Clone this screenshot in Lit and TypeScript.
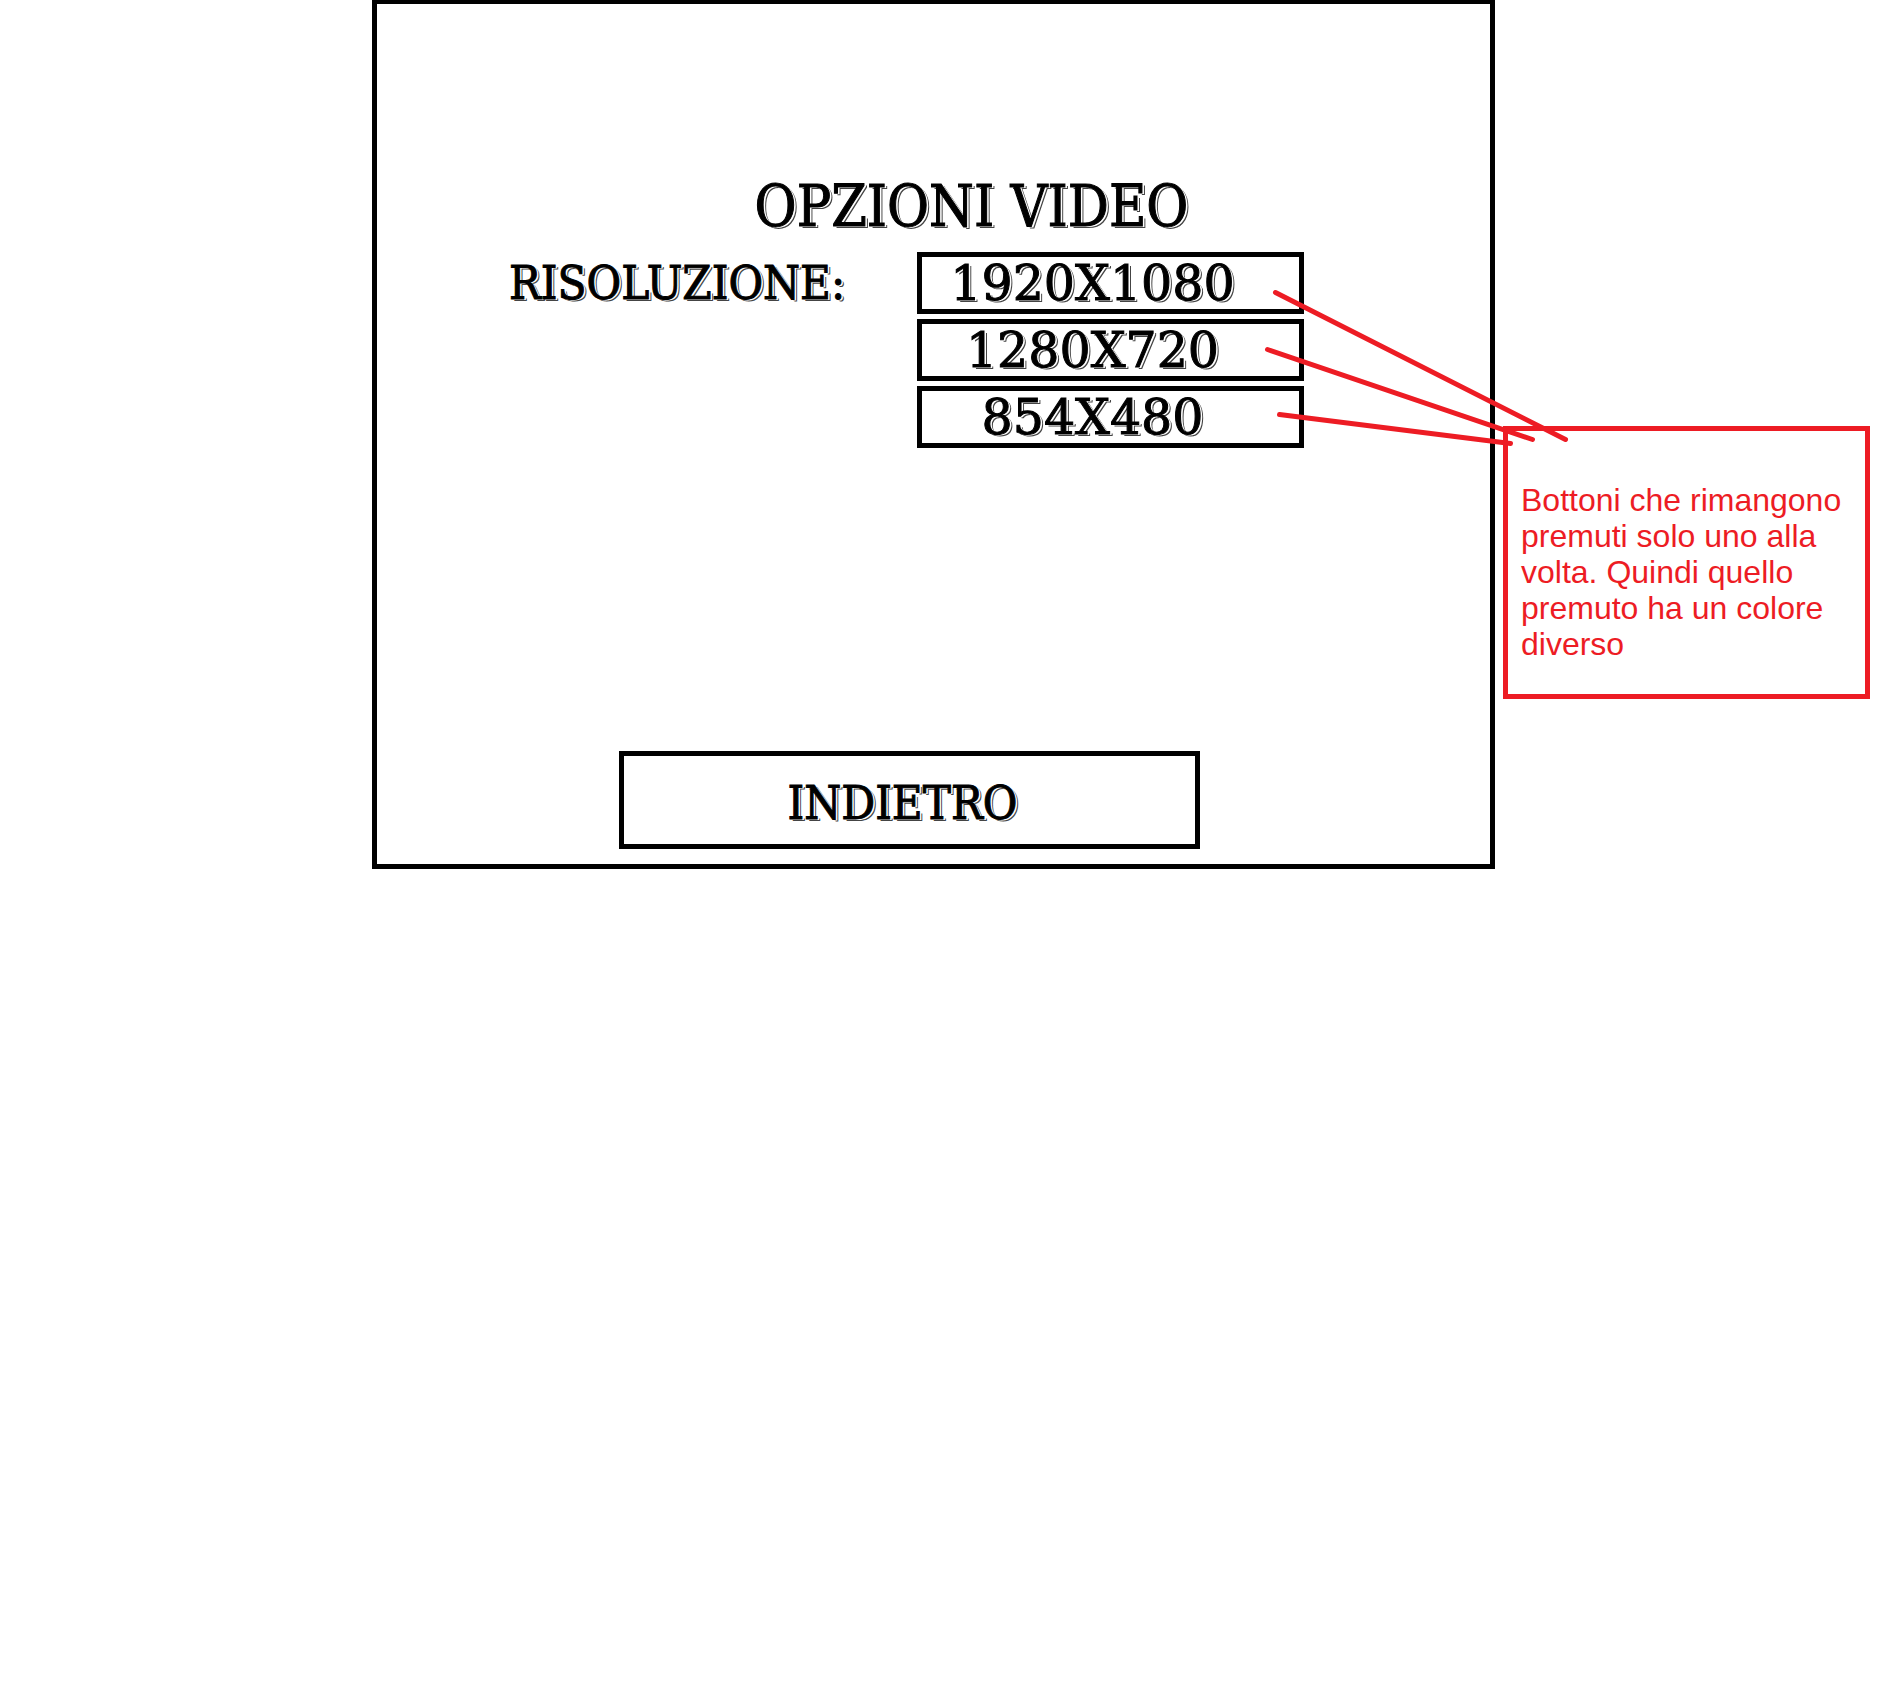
import { LitElement, html, css } from "lit";
import { customElement, state } from "lit/decorators.js";

@customElement("app-root")
export class AppRoot extends LitElement {
  @state() private selected = "";

  private readonly resolutions = ["1920X1080", "1280X720", "854X480"];

  static styles = css`
    :host {
      display: block;
      min-height: 100vh;
      background: #fff;
      color: #000;
    }
    .page {
      position: relative;
      display: grid;
      grid-template-columns: 372fr 1123fr 8fr 367fr 8fr;
      align-items: start;
    }
    .screen {
      grid-column: 2;
      box-sizing: border-box;
      border: 5px solid #000;
      border-top-width: 4px;
      padding: 170px 0 15px;
      display: flex;
      flex-direction: column;
    }
    .engraved {
      font-family: "DejaVu Serif Condensed", "DejaVu Serif", serif;
      font-weight: 400;
      white-space: nowrap;
      -webkit-text-stroke: 1px #000;
      text-shadow: 2px 1px 0 #fff, 3px 2px 0 #444;
    }
    .title {
      margin: 0;
      padding-left: 76px;
      text-align: center;
      font-size: 57px;
      line-height: 64px;
    }
    .options {
      display: grid;
      grid-template-columns: 132fr 408fr 387fr 186fr;
      margin-top: 14px;
    }
    .label {
      grid-column: 2;
      font-size: 47px;
      line-height: 62px;
    }
    .choices {
      grid-column: 3;
      display: flex;
      flex-direction: column;
      gap: 5px;
    }
    button {
      box-sizing: border-box;
      margin: 0;
      border: 5px solid #000;
      background: #fff;
      color: #000;
      cursor: pointer;
    }
    .choice {
      height: 62px;
      padding: 2px 36px 0 0;
      font-family: "DejaVu Serif", serif;
      font-size: 49px;
      line-height: 50px;
    }
    .choice[aria-pressed="true"] {
      background: #ffe08a;
    }
    .footer {
      display: grid;
      grid-template-columns: 242fr 581fr 290fr;
      margin-top: 303px;
    }
    .back {
      grid-column: 2;
      height: 98px;
      padding: 6px 14px 0 0;
      font-size: 47px;
      line-height: 56px;
    }
    .note {
      grid-column: 4;
      box-sizing: border-box;
      margin: 426px 0 0;
      border: 5px solid #ed1c24;
      padding: 51px 13px 32px;
      color: #ed1c24;
      font-family: "Liberation Sans", Arial, sans-serif;
      font-size: 32px;
      line-height: 36px;
    }
    .connectors {
      position: absolute;
      top: 0;
      left: 0;
      width: 100%;
      height: 869px;
      pointer-events: none;
      stroke: #ed1c24;
      stroke-width: 5px;
      stroke-linecap: round;
    }
    .connectors line {
      vector-effect: non-scaling-stroke;
    }
  `;

  render() {
    return html`
      <div class="page">
        <main class="screen">
          <h1 class="title engraved">OPZIONI VIDEO</h1>
          <div class="options">
            <div class="label engraved" id="resolution-label">RISOLUZIONE:</div>
            <div class="choices" role="group" aria-labelledby="resolution-label">
              ${this.resolutions.map(
                (r) => html`<button
                  type="button"
                  class="engraved choice"
                  aria-pressed=${this.selected === r ? "true" : "false"}
                  @click=${() => (this.selected = r)}
                >${r}</button>`
              )}
            </div>
          </div>
          <div class="footer">
            <button type="button" class="back engraved">INDIETRO</button>
          </div>
        </main>
        <p class="note">
          Bottoni che rimangono premuti solo uno alla volta. Quindi quello premuto ha un colore diverso
        </p>
        <svg class="connectors" viewBox="0 0 1878 869" preserveAspectRatio="none" aria-hidden="true">
          <line x1="1275.5" y1="292.5" x2="1565.5" y2="439.5" />
          <line x1="1267.5" y1="349.5" x2="1532.5" y2="439.5" />
          <line x1="1279.5" y1="414.5" x2="1510.5" y2="443.5" />
        </svg>
      </div>
    `;
  }
}
